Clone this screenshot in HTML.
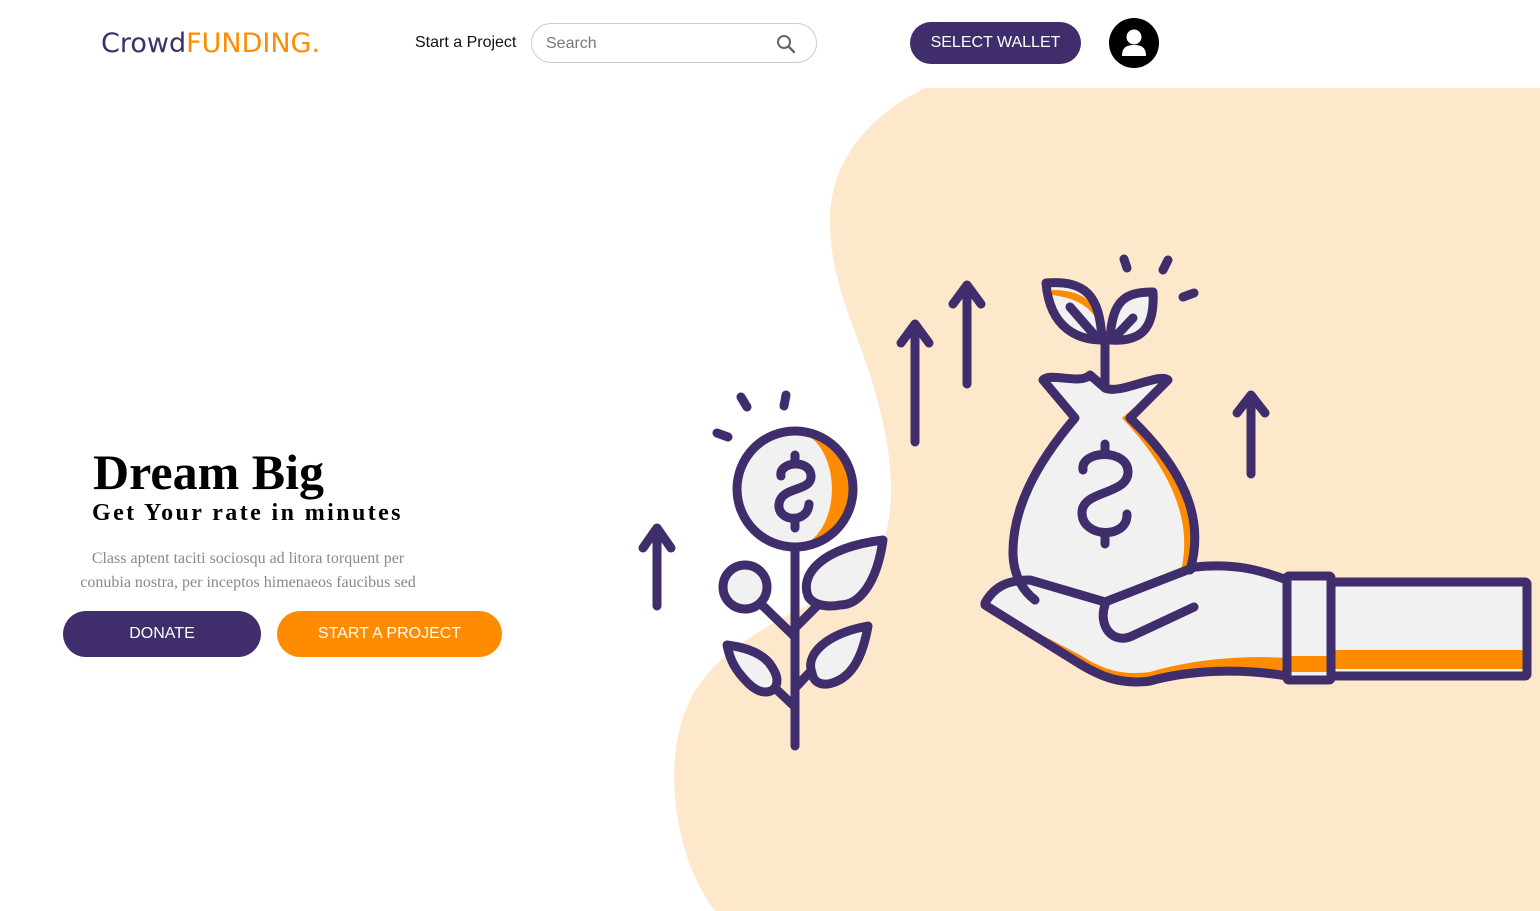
<!DOCTYPE html>
<html><head><meta charset="utf-8"><style>
*{margin:0;padding:0;box-sizing:border-box}
body{width:1540px;height:911px;overflow:hidden;background:#fff;position:relative;font-family:"Liberation Sans",sans-serif}
.abs{position:absolute}
.logo{left:101px;top:28px;color:#3f2e6b;font-family:"DejaVu Sans","Liberation Sans",sans-serif;font-size:27px}
.logo span{color:#ff8c00}
.nav{left:415px;top:34px;font-size:16px;color:#111}
.search{left:531px;top:23px;width:286px;height:40px;border:1px solid #ccc;border-radius:20px}
.search span{position:absolute;left:14px;top:11px;font-size:16px;color:#777}
.wallet{left:910px;top:22px;width:171px;height:42px;border-radius:21px;background:#3f2e6b;color:#fff;font-size:16px;text-align:center;line-height:42px}
.avatar{left:1109px;top:18px;width:50px;height:50px;border-radius:50%;background:#000}
h1{position:absolute;left:93px;top:443px;font-family:"Liberation Serif",serif;font-size:50px;font-weight:bold;color:#000}
h2{position:absolute;left:92px;top:500px;font-family:"Liberation Serif",serif;font-size:24px;font-weight:bold;letter-spacing:2.4px;color:#000}
p{position:absolute;left:75px;top:547px;width:346px;text-align:center;font-family:"Liberation Serif",serif;font-size:16px;line-height:24px;color:#888}
.btn{position:absolute;top:611px;height:46px;border-radius:23px;color:#fff;font-size:16px;text-align:center;line-height:46px}
</style></head><body>
<svg class="abs" style="left:0;top:0" width="1540" height="911" viewBox="0 0 1540 911">
<path d="M925,88 L1540,88 L1540,911 L715,911 C675,860 660,760 690,700 C720,640 800,610 860,580 C900,540 895,470 880,410 C860,330 830,290 830,220 C830,160 870,115 925,88 Z" fill="#fee8cc"/>
<g fill="none" stroke="#3f2e6b" stroke-width="9" stroke-linecap="round" stroke-linejoin="round">
<path d="M657,606 V530 M643,548 L657,528 L671,548"/>
<path d="M915,442 V326 M901,343 L915,324 L929,343"/>
<path d="M967,384 V287 M953,304 L967,285 L981,304"/>
<path d="M1251,474 V397 M1237,413 L1251,395 L1265,413"/>
<path d="M717,433 L728,437 M741,397 L747,407 M786,395 L784,406 M1124,259 L1127,268 M1168,260 L1163,270 M1183,297 L1194,293"/>
</g>
<circle cx="795" cy="489" r="58" fill="#f1f1f1"/>
<path d="M795,432 A56,57 0 0 1 795,546 A35,54 0 0 0 795,432 Z" fill="#ff8c00"/>
<g fill="none" stroke="#3f2e6b" stroke-width="9" stroke-linecap="round" stroke-linejoin="round">
<circle cx="795" cy="489" r="58"/>
<path d="M795,455 V462 M795,522 V528 M781,476 C778,462 810,458 811,476 C812,492 781,486 779,504 C777,522 808,524 809,504"/>
<path d="M795,550 V746"/>
<circle cx="745" cy="587" r="22" fill="#f1f1f1"/>
<path d="M760,603 L795,637 M795,628 L822,601 M795,688 L811,671 M795,707 L775,688"/>
<path d="M808,596 C800,575 820,548 883,540 C877,582 860,605 840,605 C825,608 812,604 808,596 Z" fill="#f1f1f1"/>
<path d="M812,673 C805,655 825,634 868,626 C862,660 850,680 828,684 C818,685 813,680 812,673 Z" fill="#f1f1f1"/>
<path d="M776,686 C772,694 760,695 748,683 C735,670 730,660 727,645 C750,648 765,655 772,667 C777,675 778,680 776,686 Z" fill="#f1f1f1"/>
</g>
<path d="M1046,283 C1085,280 1100,295 1102,340 C1080,340 1050,330 1046,283 Z" fill="#f1f1f1"/>
<path d="M1052,290 C1080,290 1096,300 1100,325 C1090,305 1075,298 1052,295 Z" fill="#ff8c00"/>
<path d="M1110,340 C1112,300 1125,292 1153,292 C1155,330 1140,342 1110,340 Z" fill="#f1f1f1"/>
<path d="M1035,605 C1022,595 1014,580 1013,555 C1012,510 1035,465 1075,418 L1043,380 C1050,372 1080,385 1090,375 L1105,388 C1120,395 1160,372 1168,380 L1130,418 C1195,480 1202,530 1190,570 L1155,600 Z" fill="#f1f1f1"/>
<path d="M1160,385 L1122,418 C1180,480 1192,530 1180,575 L1192,570 C1202,530 1195,480 1135,418 Z" fill="#ff8c00"/>
<path d="M985,603 C995,585 1010,580 1030,580 L1105,602 L1195,567 C1235,563 1260,570 1287,580 L1287,676 C1240,668 1190,670 1150,681 C1120,685 1100,676 1080,664 Z" fill="#f1f1f1"/>
<path d="M990,608 L1080,655 C1100,668 1120,676 1150,672 C1190,660 1240,655 1287,658 L1287,676 C1240,668 1190,670 1150,681 C1120,685 1100,676 1080,664 L985,605 Z" fill="#ff8c00"/>
<rect x="1287" y="576" width="44" height="104" fill="#f1f1f1"/>
<rect x="1290" y="656" width="38" height="16" fill="#ff8c00"/>
<rect x="1331" y="582" width="196" height="94" fill="#f1f1f1"/>
<rect x="1331" y="650" width="196" height="19" fill="#ff8c00"/>
<g fill="none" stroke="#3f2e6b" stroke-width="9" stroke-linecap="round" stroke-linejoin="round">
<path d="M1046,283 C1085,280 1100,295 1102,340 C1080,340 1050,330 1046,283 Z M1070,307 L1097,338"/>
<path d="M1110,340 C1112,300 1125,292 1153,292 C1155,330 1140,342 1110,340 Z M1133,318 L1115,337"/>
<path d="M1105,340 V385"/>
<path d="M1035,600 C1022,590 1014,575 1013,555 C1012,510 1035,465 1075,418 L1043,380 C1050,372 1080,385 1090,375 L1105,388 C1120,395 1160,372 1168,380 L1130,418 C1195,480 1202,530 1190,570"/>
<path d="M1105,444 V452 M1105,536 V544 M1083,470 C1080,450 1128,448 1128,472 C1128,495 1083,490 1082,512 C1081,538 1128,540 1127,514"/>
<path d="M985,603 C995,585 1010,580 1030,580 L1105,602 L1195,567 C1235,563 1260,570 1287,580"/>
<path d="M985,605 L1080,664 C1100,676 1120,685 1150,681 C1190,670 1240,668 1287,676"/>
<path d="M1105,605 C1098,625 1112,645 1132,636 L1194,607"/>
<rect x="1287" y="576" width="44" height="104" rx="2"/>
<rect x="1331" y="582" width="196" height="94" rx="2"/>
</g>
</svg>
<div class="abs logo">Crowd<span>FUNDING.</span></div>
<div class="abs nav">Start a Project</div>
<div class="abs search"><span>Search</span>
<svg style="position:absolute;left:243px;top:9px" width="22" height="22" viewBox="0 0 22 22"><circle cx="9" cy="9" r="6" fill="none" stroke="#666" stroke-width="2"/><path d="M13.5,13.5 L19,19" stroke="#666" stroke-width="2.4" stroke-linecap="round"/></svg></div>
<div class="abs wallet">SELECT WALLET</div>
<div class="abs avatar"><svg width="50" height="50" viewBox="0 0 50 50"><circle cx="25" cy="19" r="7.5" fill="#fff"/><path d="M13,38 C13,29 18,27 25,27 C32,27 37,29 37,38 Z" fill="#fff"/></svg></div>
<h1>Dream Big</h1>
<h2>Get Your rate in minutes</h2>
<p>Class aptent taciti sociosqu ad litora torquent per conubia nostra, per inceptos himenaeos faucibus sed</p>
<div class="btn" style="left:63px;width:198px;background:#3f2e6b">DONATE</div>
<div class="btn" style="left:277px;width:225px;background:#ff8c00">START A PROJECT</div>
</body></html>
